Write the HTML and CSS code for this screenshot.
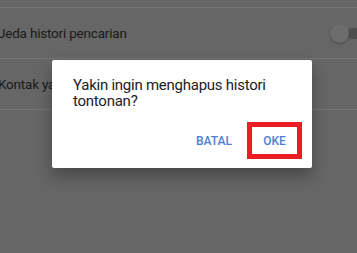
FILE: index.html
```html
<!DOCTYPE html>
<html lang="id">
<head>
  <meta charset="UTF-8">
  <title>Histori</title>
  <link rel="stylesheet" href="styles.css">
</head>
<body>

  <div class="settings">
    <div class="row row-top"></div>
    <div class="row">
      <span class="label">Jeda histori pencarian</span>
      <span class="toggle"><span class="track"></span><span class="thumb"></span></span>
    </div>
    <div class="row">
      <span class="label">Kontak yang disarankan</span>
    </div>
  </div>

  <div class="dialog">
    <p class="message">Yakin ingin menghapus histori tontonan?</p>
    <div class="actions">
      <button class="btn">BATAL</button>
      <button class="btn btn-ok">OKE</button>
    </div>
  </div>

</body>
</html>
```

FILE: styles.css
```css
body {
  margin: 0;
  width: 357px;
  height: 253px;
  overflow: hidden;
  background: #666666;
  font-family: Roboto, "Liberation Sans", sans-serif;
  position: relative;
}
.settings {
  margin-left: -2px;
}
.row {
  height: 50px;
  border-bottom: 1px solid #747474;
  display: flex;
  align-items: center;
  justify-content: space-between;
}
.row-top {
  height: 7px;
}
.label {
  font-size: 13.5px;
  letter-spacing: -0.2px;
  color: #1a1a1a;
}
.toggle {
  position: relative;
  width: 27px;
  height: 19px;
  margin-top: 1px;
}
.track {
  position: absolute;
  left: 17px;
  top: 4px;
  width: 20px;
  height: 11px;
  background: #4e4e4e;
  border-radius: 5px;
}
.thumb {
  position: absolute;
  left: 0;
  top: 0;
  width: 19px;
  height: 19px;
  border-radius: 50%;
  background: #6d6d6d;
  box-shadow: 0 1px 2px rgba(0, 0, 0, 0.3);
}
.dialog {
  position: absolute;
  left: 52px;
  top: 60px;
  width: 260px;
  height: 108px;
  background: #fff;
  border-radius: 2px;
  box-shadow: 0 8px 16px rgba(0, 0, 0, 0.3);
  box-sizing: border-box;
  padding: 17px 21px 0 21px;
}
.message {
  margin: 0;
  font-size: 15px;
  line-height: 16px;
  letter-spacing: -0.25px;
  color: #222;
}
.actions {
  display: flex;
  justify-content: flex-end;
  align-items: center;
  margin-top: 13px;
  margin-right: -11px;
  gap: 1px;
}
.btn {
  font-family: Roboto, "Liberation Sans", sans-serif;
  font-size: 12px;
  font-weight: 500;
  color: #4a7fd8;
  background: none;
  border: 5px solid transparent;
  padding: 0 9px;
  height: 37px;
  box-sizing: border-box;
}
.btn-ok {
  width: 55px;
  border-color: #ed1c24;
}
```
